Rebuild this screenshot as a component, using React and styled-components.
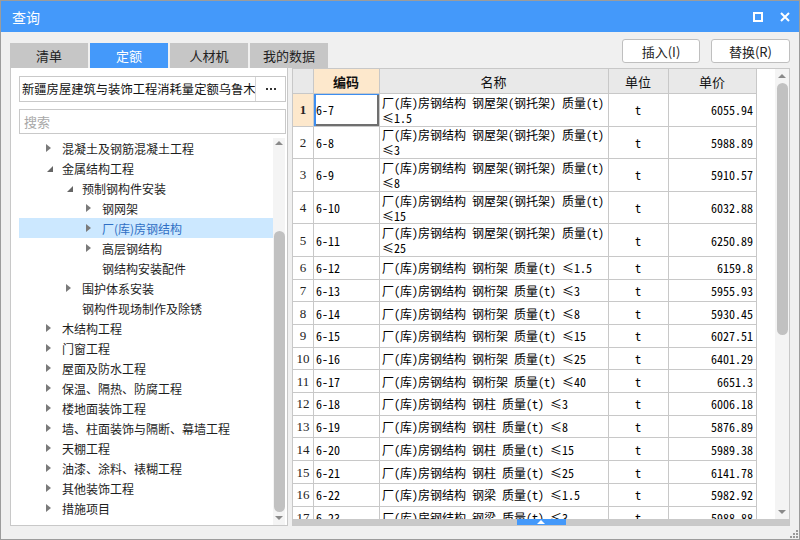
import React from "react";
import styled, { createGlobalStyle } from "styled-components";

const BLUE = "#4499fa";
const LINE = "#c8c8c8";
const UI_FONT = `"Noto Sans CJK SC", "Microsoft YaHei", sans-serif`;
const CELL_FONT = `"Noto Sans Mono CJK SC", "Liberation Mono", "Noto Sans CJK SC", monospace`;

const GlobalStyle = createGlobalStyle`
  body {
    margin: 0;
    font-family: ${UI_FONT};
    background: #f0f0f0;
  }
`;

const tabs = ["清单", "定额", "人材机", "我的数据"];

const tree = [
  { level: 0, label: "混凝土及钢筋混凝土工程", arrow: "right" },
  { level: 0, label: "金属结构工程", arrow: "down" },
  { level: 1, label: "预制钢构件安装", arrow: "down" },
  { level: 2, label: "钢网架", arrow: "right" },
  { level: 2, label: "厂(库)房钢结构", arrow: "right", selected: true },
  { level: 2, label: "高层钢结构", arrow: "right" },
  { level: 2, label: "钢结构安装配件" },
  { level: 1, label: "围护体系安装", arrow: "right" },
  { level: 1, label: "钢构件现场制作及除锈" },
  { level: 0, label: "木结构工程", arrow: "right" },
  { level: 0, label: "门窗工程", arrow: "right" },
  { level: 0, label: "屋面及防水工程", arrow: "right" },
  { level: 0, label: "保温、隔热、防腐工程", arrow: "right" },
  { level: 0, label: "楼地面装饰工程", arrow: "right" },
  { level: 0, label: "墙、柱面装饰与隔断、幕墙工程", arrow: "right" },
  { level: 0, label: "天棚工程", arrow: "right" },
  { level: 0, label: "油漆、涂料、裱糊工程", arrow: "right" },
  { level: 0, label: "其他装饰工程", arrow: "right" },
  { level: 0, label: "措施项目", arrow: "right" },
];

const rows = [
  ["6-7", "厂(库)房钢结构 钢屋架(钢托架) 质量(t) ≤1.5", "6055.94"],
  ["6-8", "厂(库)房钢结构 钢屋架(钢托架) 质量(t) ≤3", "5988.89"],
  ["6-9", "厂(库)房钢结构 钢屋架(钢托架) 质量(t) ≤8", "5910.57"],
  ["6-10", "厂(库)房钢结构 钢屋架(钢托架) 质量(t) ≤15", "6032.88"],
  ["6-11", "厂(库)房钢结构 钢屋架(钢托架) 质量(t) ≤25", "6250.89"],
  ["6-12", "厂(库)房钢结构 钢桁架 质量(t) ≤1.5", "6159.8"],
  ["6-13", "厂(库)房钢结构 钢桁架 质量(t) ≤3", "5955.93"],
  ["6-14", "厂(库)房钢结构 钢桁架 质量(t) ≤8", "5930.45"],
  ["6-15", "厂(库)房钢结构 钢桁架 质量(t) ≤15", "6027.51"],
  ["6-16", "厂(库)房钢结构 钢桁架 质量(t) ≤25", "6401.29"],
  ["6-17", "厂(库)房钢结构 钢桁架 质量(t) ≤40", "6651.3"],
  ["6-18", "厂(库)房钢结构 钢柱 质量(t) ≤3", "6006.18"],
  ["6-19", "厂(库)房钢结构 钢柱 质量(t) ≤8", "5876.89"],
  ["6-20", "厂(库)房钢结构 钢柱 质量(t) ≤15", "5989.38"],
  ["6-21", "厂(库)房钢结构 钢柱 质量(t) ≤25", "6141.78"],
  ["6-22", "厂(库)房钢结构 钢梁 质量(t) ≤1.5", "5982.92"],
  ["6-23", "厂(库)房钢结构 钢梁 质量(t) ≤3", "5988.88"],
];

const Window = styled.div`
  width: 800px;
  height: 540px;
  box-sizing: border-box;
  border: 1px solid #9c9c9c;
  background: #f0f0f0;
  display: flex;
  flex-direction: column;
  overflow: hidden;
`;

const TitleBar = styled.div`
  height: 31px;
  flex: none;
  background: ${BLUE};
  color: #fff;
  display: flex;
  align-items: center;
  padding: 0 9px 0 11px;
  font-size: 14px;
`;

const TitleText = styled.div`
  flex: 1;
`;

const TitleIcons = styled.div`
  display: flex;
  gap: 17px;
  align-items: center;
`;

const Toolbar = styled.div`
  height: 36px;
  flex: none;
  display: flex;
  align-items: flex-end;
  padding: 0 9px;
`;

const Tabs = styled.div`
  display: flex;
  gap: 2px;
`;

const Tab = styled.div`
  width: 78px;
  height: 25px;
  display: flex;
  align-items: center;
  justify-content: center;
  font-size: 13px;
  background: ${(p) => (p.$active ? BLUE : "#c6c6c6")};
  color: ${(p) => (p.$active ? "#fff" : "#222")};
`;

const Actions = styled.div`
  margin-left: auto;
  align-self: flex-start;
  margin-top: 7px;
  display: flex;
  gap: 11px;
`;

const Button = styled.div`
  width: ${(p) => p.$w}px;
  height: 24px;
  box-sizing: border-box;
  background: #fff;
  border: 1px solid #bfbfbf;
  border-radius: 3px;
  display: flex;
  align-items: center;
  justify-content: center;
  font-size: 13px;
  color: #222;
`;

const Main = styled.div`
  height: 458px;
  flex: none;
  display: flex;
  gap: 4px;
  padding: 0 9px;
`;

const LeftPanel = styled.div`
  width: 278px;
  box-sizing: border-box;
  background: #fff;
  border: 1px solid ${LINE};
  border-top: none;
  padding: 8px 1px 0 8px;
  display: flex;
  flex-direction: column;
`;

const Combo = styled.div`
  height: 26px;
  box-sizing: border-box;
  border: 1px solid #c9c9c9;
  display: flex;
  flex: none;
`;

const ComboText = styled.div`
  flex: 1;
  min-width: 0;
  overflow: hidden;
  white-space: nowrap;
  padding: 0 2px;
  font-size: 12.3px;
  line-height: 24px;
  color: #111;
`;

const ComboButton = styled.div`
  width: 29px;
  flex: none;
  border-left: 1px solid #d6d6d6;
  display: flex;
  align-items: center;
  justify-content: center;
  gap: 2px;
`;

const Dot = styled.span`
  width: 2px;
  height: 2px;
  background: #333;
`;

const Search = styled.input`
  margin-top: 7px;
  height: 25px;
  flex: none;
  box-sizing: border-box;
  border: 1px solid #c9c9c9;
  padding: 0 4px;
  font-family: ${UI_FONT};
  font-size: 13px;
  outline: none;
  &::placeholder {
    color: #a8a8a8;
  }
`;

const TreeArea = styled.div`
  margin-top: 4px;
  flex: 1;
  min-height: 0;
  display: flex;
`;

const TreeList = styled.div`
  flex: 1;
  overflow: hidden;
`;

const TreeRow = styled.div`
  height: 20px;
  display: flex;
  align-items: center;
  padding-left: ${(p) => 27 + p.$level * 20}px;
  background: ${(p) => (p.$selected ? "#cce8ff" : "transparent")};
  color: ${(p) => (p.$selected ? "#2f6fc4" : "#1e1e1e")};
  font-size: 12px;
  white-space: nowrap;
`;

const ArrowSlot = styled.span`
  width: 16px;
  flex: none;
  display: flex;
  align-items: center;
`;

const VScroll = styled.div`
  width: ${(p) => p.$w}px;
  flex: none;
  display: flex;
  flex-direction: column;
  align-items: center;
  background: #f4f4f4;
  margin-right: ${(p) => p.$mr || 0}px;
`;

const ScrollArrow = styled.div`
  height: ${(p) => p.$h}px;
  flex: none;
  display: flex;
  align-items: center;
  justify-content: center;
`;

const Thumb = styled.div`
  width: 11px;
  border-radius: 6px;
  background: #c1c1c1;
  margin-top: ${(p) => p.$top}px;
  height: ${(p) => p.$h}px;
`;

const Spacer = styled.div`
  flex: 1;
`;

const RightPanel = styled.div`
  flex: 1;
  box-sizing: border-box;
  border: 1px solid ${LINE};
  background: #fff;
  display: flex;
  flex-direction: column;
  min-width: 0;
`;

const GridArea = styled.div`
  flex: 1;
  min-height: 0;
  display: flex;
`;

const TableWrap = styled.div`
  flex: 1;
  overflow: hidden;
`;

const Row = styled.div`
  display: grid;
  grid-template-columns: 21px 66px 229px 60px 88px;
  height: ${(p) => p.$h}px;
  box-sizing: border-box;
  border-bottom: 1px solid ${LINE};
  width: 464px;
`;

const Cell = styled.div`
  border-right: 1px solid ${LINE};
  display: flex;
  align-items: center;
  justify-content: ${(p) =>
    p.$align === "right" ? "flex-end" : p.$align === "center" ? "center" : "flex-start"};
  padding: 0 ${(p) => (p.$align === "right" ? 3 : 1)}px 0 ${(p) => (p.$align === "left" ? 2 : 0)}px;
  font-family: ${CELL_FONT};
  font-size: 12px;
  line-height: 15px;
  color: #000;
  overflow: hidden;
  background: ${(p) => p.$bg || "transparent"};
  box-shadow: ${(p) =>
    p.$focus ? "inset 2px 1px 0 #3d8ef0, inset -2px -2px 0 #6f6f6f" : "none"};
`;

const HeadCell = styled(Cell)`
  font-family: ${UI_FONT};
  font-size: 13px;
  font-weight: ${(p) => (p.$bold ? "bold" : "normal")};
  background: ${(p) => p.$bg || "#e9e9e9"};
  color: #111;
`;

const RowNum = styled(Cell)`
  font-family: "Liberation Serif", serif;
  font-size: 13px;
  font-weight: ${(p) => (p.$bold ? "bold" : "normal")};
  justify-content: center;
  padding: 0;
  color: #222;
`;

const Splitter = styled.div`
  height: 6px;
  flex: none;
  background: #c9c9c9;
  display: flex;
  justify-content: center;
`;

const SplitHandle = styled.div`
  width: 49px;
  background: ${BLUE};
  display: flex;
  align-items: center;
  justify-content: center;
`;

const Footer = styled.div`
  flex: 1;
  display: flex;
  justify-content: flex-end;
  align-items: flex-end;
  padding: 0 1px 1px 0;
`;

const Tri = ({ dir, color = "#7a7a7a" }) => {
  if (dir === "right")
    return (
      <svg width="5" height="8" viewBox="0 0 5 8">
        <path d="M0 0 L5 4 L0 8 Z" fill={color} />
      </svg>
    );
  if (dir === "down")
    return (
      <svg width="6" height="6" viewBox="0 0 6 6" style={{ marginLeft: 1, marginTop: 2 }}>
        <path d="M6 0 L6 6 L0 6 Z" fill="#666" />
      </svg>
    );
  if (dir === "up")
    return (
      <svg width="8" height="4" viewBox="0 0 8 4">
        <path d="M0 4 L4 0 L8 4 Z" fill={color} />
      </svg>
    );
  return (
    <svg width="8" height="4" viewBox="0 0 8 4">
      <path d="M0 0 L8 0 L4 4 Z" fill={color} />
    </svg>
  );
};

const App = () => {
  return (
    <>
      <GlobalStyle />
      <Window>
        <TitleBar>
          <TitleText>查询</TitleText>
          <TitleIcons>
            <svg width="10" height="10" viewBox="0 0 10 10">
              <rect x="1" y="1" width="8" height="8" fill="none" stroke="#fff" strokeWidth="2" />
            </svg>
            <svg width="10" height="10" viewBox="0 0 10 10">
              <path d="M1 1 L9 9 M9 1 L1 9" stroke="#fff" strokeWidth="2" />
            </svg>
          </TitleIcons>
        </TitleBar>

        <Toolbar>
          <Tabs>
            {tabs.map((t, i) => (
              <Tab key={t} $active={i === 1}>
                {t}
              </Tab>
            ))}
          </Tabs>
          <Actions>
            <Button $w={78}>插入(I)</Button>
            <Button $w={79}>替换(R)</Button>
          </Actions>
        </Toolbar>

        <Main>
          <LeftPanel>
            <Combo>
              <ComboText>新疆房屋建筑与装饰工程消耗量定额乌鲁木齐地区</ComboText>
              <ComboButton>
                <Dot />
                <Dot />
                <Dot />
              </ComboButton>
            </Combo>
            <Search placeholder="搜索" />
            <TreeArea>
              <TreeList>
                {tree.map((t) => (
                  <TreeRow key={t.label} $level={t.level} $selected={t.selected}>
                    <ArrowSlot>{t.arrow && <Tri dir={t.arrow} />}</ArrowSlot>
                    {t.label}
                  </TreeRow>
                ))}
              </TreeList>
              <VScroll $w={12} $mr={1}>
                <ScrollArrow $h={9}>
                  <Tri dir="up" color="#8a8a8a" />
                </ScrollArrow>
                <Thumb $top={84} $h={281} />
                <ScrollArrow $h={12}>
                  <Tri dir="downArrow" color="#8a8a8a" />
                </ScrollArrow>
              </VScroll>
            </TreeArea>
          </LeftPanel>

          <RightPanel>
            <GridArea>
              <TableWrap>
                <Row $h={25}>
                  <HeadCell />
                  <HeadCell $align="center" $bold $bg="#fde8cc">编码</HeadCell>
                  <HeadCell $align="center">名称</HeadCell>
                  <HeadCell $align="center">单位</HeadCell>
                  <HeadCell $align="center">单价</HeadCell>
                </Row>
                {rows.map(([code, name, price], i) => (
                  <Row key={code} $h={i < 5 ? 32.6 : 22.7}>
                    <RowNum $bold={i === 0} $bg={i === 0 ? "#fde8cc" : undefined}>
                      {i + 1}
                    </RowNum>
                    <Cell $align="left" $focus={i === 0}>{code}</Cell>
                    <Cell $align="left">{name}</Cell>
                    <Cell $align="center">t</Cell>
                    <Cell $align="right">{price}</Cell>
                  </Row>
                ))}
              </TableWrap>
              <VScroll $w={14}>
                <ScrollArrow $h={14}>
                  <Tri dir="up" color="#8a8a8a" />
                </ScrollArrow>
                <Thumb $top={0} $h={252} />
                <Spacer />
                <ScrollArrow $h={14}>
                  <Tri dir="downArrow" color="#8a8a8a" />
                </ScrollArrow>
              </VScroll>
            </GridArea>
            <Splitter>
              <SplitHandle>
                <svg width="8" height="4" viewBox="0 0 8 4">
                  <path d="M0 4 L4 0 L8 4 Z" fill="#fff" />
                </svg>
              </SplitHandle>
            </Splitter>
          </RightPanel>
        </Main>

        <Footer>
          <svg width="8" height="8" viewBox="0 0 8 8">
            {[[6, 0], [6, 3], [3, 3], [6, 6], [3, 6], [0, 6]].map(([x, y]) => (
              <rect key={`${x}-${y}`} x={x} y={y} width="2" height="2" fill="#9a9a9a" />
            ))}
          </svg>
        </Footer>
      </Window>
    </>
  );
};

export default App;
